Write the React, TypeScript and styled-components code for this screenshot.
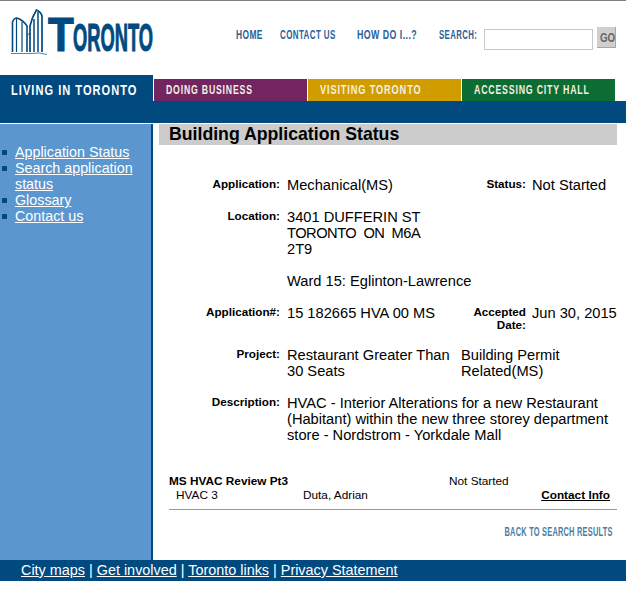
import styled, { createGlobalStyle } from "styled-components";

const GlobalStyle = createGlobalStyle`
  html, body {
    margin: 0;
    padding: 0;
    background: #fff;
  }
  body {
    font-family: "Liberation Sans", Arial, sans-serif;
    color: #000;
  }
`;

function CityHallLogo() {
  return (
    <svg width="38" height="46" viewBox="0 0 38 46" fill="none" stroke="#004a80">
      <path d="M1.5 43V13Q3 9 6 9Q12 11 16 17V43" strokeWidth="1.6" />
      <path d="M5.5 43V10M11 43V13" strokeWidth="1.2" />
      <path d="M19 43V17Q21 8 25.5 1Q30 3 31 7V43" strokeWidth="1.7" />
      <path d="M23 43V10M27 43V3" strokeWidth="1.5" />
      <path d="M16 26Q18 25 19 24" strokeWidth="1" />
      <path d="M0 44.5H20Q28 43 36 45.5" stroke="#3f8f9f" strokeWidth="1" />
    </svg>
  );
}

export default function App() {
  return (
    <>
      <GlobalStyle />
      <Page>
        <Header>
          <LogoLink>
            <CityHallLogo />
            <LogoWord>
              <LogoCap>T</LogoCap>
              <LogoRest>ORONTO</LogoRest>
            </LogoWord>
          </LogoLink>
          <TopNav>
            <TopLink $width={44}><Squeezed $scale={0.7}>HOME</Squeezed></TopLink>
            <TopLink $width={77}><Squeezed $scale={0.665}>CONTACT US</Squeezed></TopLink>
            <TopLink $width={82}><Squeezed $scale={0.735}>HOW DO I...?</Squeezed></TopLink>
            <TopLink $width={45}><Squeezed $scale={0.65}>SEARCH:</Squeezed></TopLink>
            <SearchInput />
            <GoButton><Squeezed $scale={0.75}>GO</Squeezed></GoButton>
          </TopNav>
        </Header>

        <TabBar>
          <ActiveTab><Squeezed $scale={0.79}>LIVING IN TORONTO</Squeezed></ActiveTab>
          <Tab $color="#722561"><Squeezed $scale={0.67}>DOING BUSINESS</Squeezed></Tab>
          <Tab $color="#d19c00"><Squeezed $scale={0.71}>VISITING TORONTO</Squeezed></Tab>
          <Tab $color="#0d6c34"><Squeezed $scale={0.675}>ACCESSING CITY HALL</Squeezed></Tab>
        </TabBar>
        <BlueStrip />

        <Columns>
          <Sidebar>
            <SideList>
              <li><SideLink>Application Status</SideLink></li>
              <li><SideLink>Search application status</SideLink></li>
              <li><SideLink>Glossary</SideLink></li>
              <li><SideLink>Contact us</SideLink></li>
            </SideList>
          </Sidebar>

          <Content>
            <Heading>Building Application Status</Heading>

            <Details>
              <Label>Application:</Label>
              <Value>Mechanical(MS)</Value>
              <Label>Status:</Label>
              <SideValue>Not Started</SideValue>

              <Label>Location:</Label>
              <WideValue>
                3401 DUFFERIN ST
                <br />
                <TightLine>TORONTO&nbsp; ON&nbsp; M6A</TightLine>
                <br />
                2T9
                <br />
                <br />
                Ward 15: Eglinton-Lawrence
              </WideValue>

              <Label>Application#:</Label>
              <Value>15 182665 HVA 00 MS</Value>
              <Label>
                Accepted
                <br />
                Date:
              </Label>
              <SideValue>Jun 30, 2015</SideValue>

              <Label>Project:</Label>
              <Value>Restaurant Greater Than 30 Seats</Value>
              <SpanValue>
                Building Permit
                <br />
                Related(MS)
              </SpanValue>

              <Label>Description:</Label>
              <FullValue>
                HVAC - Interior Alterations for a new Restaurant (Habitant) within the new three storey
                department store - Nordstrom - Yorkdale Mall
              </FullValue>
            </Details>

            <Review>
              <ReviewTitle>MS HVAC Review Pt3</ReviewTitle>
              <ReviewStatus>Not Started</ReviewStatus>
              <ReviewType>HVAC 3</ReviewType>
              <ReviewPerson>Duta, Adrian</ReviewPerson>
              <ContactLink>Contact Info</ContactLink>
            </Review>
            <Rule />
            <BackLink><BackText>BACK TO SEARCH RESULTS</BackText></BackLink>
          </Content>
        </Columns>

        <Footer>
          <FooterLink>City maps</FooterLink> | <FooterLink>Get involved</FooterLink> |{" "}
          <FooterLink>Toronto links</FooterLink> | <FooterLink>Privacy Statement</FooterLink>
        </Footer>
      </Page>
    </>
  );
}

const Page = styled.div`
  width: 626px;
  height: 589px;
  overflow: hidden;
  border-top: 1px solid #808080;
  box-sizing: border-box;
`;

// no narrow face is installed, so the condensed nav lettering is squeezed by hand
const Squeezed = styled.span<{ $scale: number }>`
  display: inline-block;
  white-space: nowrap;
  transform: scaleX(${(p) => p.$scale});
  transform-origin: left center;
`;

const Header = styled.header`
  height: 74px;
  display: flex;
  align-items: flex-start;
`;

const LogoLink = styled.div`
  display: flex;
  align-items: flex-start;
  padding: 8px 0 0 11px;
  width: 225px;
  box-sizing: border-box;
`;

const LogoWord = styled.div`
  display: flex;
  align-items: flex-end;
  height: 44px;
  margin-left: -1px;
  color: #004a80;
  font-weight: bold;
  line-height: 1;
  -webkit-text-stroke: 1.1px #004a80;
`;

const LogoCap = styled.span`
  display: block;
  width: 25px;
  font-size: 48px;
  line-height: 37px;
  transform: scaleX(0.88);
  transform-origin: left bottom;
`;

const LogoRest = styled.span`
  display: block;
  width: 81px;
  font-size: 39px;
  line-height: 30px;
  white-space: nowrap;
  transform: scaleX(0.47);
  transform-origin: left bottom;
`;

const TopNav = styled.nav`
  display: flex;
  align-items: flex-start;
  padding: 26px 0 0 11px;
`;

const TopLink = styled.a<{ $width: number }>`
  width: ${(p) => p.$width}px;
  flex: none;
  font-size: 12px;
  line-height: 16px;
  letter-spacing: 0.6px;
  font-weight: bold;
  color: #2a6198;
  white-space: nowrap;
`;

const SearchInput = styled.input`
  width: 109px;
  height: 21px;
  flex: none;
  box-sizing: border-box;
  border: 1px solid #c8c8c8;
  margin: 2px 4px 0 0;
  padding: 0;
`;

const GoButton = styled.button`
  width: 19px;
  height: 21px;
  flex: none;
  box-sizing: border-box;
  padding: 0 0 0 3px;
  border: 0;
  border-right: 1px solid #a8a8a8;
  border-bottom: 1px solid #a8a8a8;
  background: #cfcfcf;
  color: #666;
  font-family: "Liberation Sans", sans-serif;
  font-weight: bold;
  font-size: 13px;
  text-align: left;
`;

const TabBar = styled.div`
  display: flex;
  height: 26px;
`;

const ActiveTab = styled.div`
  width: 153px;
  box-sizing: border-box;
  padding: 8px 0 0 11px;
  background: #004a80;
  color: #fff;
  font-weight: bold;
  font-size: 14px;
  line-height: 15px;
  letter-spacing: 1.3px;
  white-space: nowrap;
  overflow: hidden;
`;

const Tab = styled.div<{ $color: string }>`
  width: 153px;
  margin: 4px 0 0 1px;
  box-sizing: border-box;
  padding: 3px 0 0 12px;
  background: ${(p) => p.$color};
  color: #f4f0e0;
  font-weight: bold;
  font-size: 13px;
  line-height: 15px;
  letter-spacing: 1.2px;
  white-space: nowrap;
  overflow: hidden;
`;

const BlueStrip = styled.div`
  height: 22px;
  background: #004a80;
`;

const Columns = styled.div`
  display: flex;
  height: 436px;
  border-top: 1px solid #fff;
`;

const Sidebar = styled.aside`
  width: 151px;
  flex: none;
  background: #5b96cf;
  border-right: 2px solid #004a80;
  padding-top: 20px;
`;

const SideList = styled.ul`
  margin: 0;
  padding: 0 0 0 15px;
  list-style: none;
  font-size: 14.3px;
  line-height: 16px;

  li {
    position: relative;
  }

  li::before {
    content: "";
    position: absolute;
    left: -13px;
    top: 6px;
    width: 5px;
    height: 5px;
    background: #004a80;
  }
`;

const SideLink = styled.a`
  color: #fff;
  text-decoration: underline;
`;

const Content = styled.main`
  flex: 1;
  padding-left: 6px;
`;

const Heading = styled.h1`
  width: 458px;
  height: 21px;
  box-sizing: border-box;
  margin: 0;
  padding-left: 10px;
  background: #cccccc;
  font-size: 17.7px;
  line-height: 21px;
  font-weight: bold;
`;

const Details = styled.div`
  display: grid;
  grid-template-columns: 121px 181px 65px 91px;
  width: 458px;
  row-gap: 16px;
  margin-top: 32px;
  font-size: 14.67px;
  line-height: 16px;
`;

const Label = styled.div`
  font-size: 11.7px;
  font-weight: bold;
  line-height: 13px;
  text-align: right;
`;

const Value = styled.div`
  padding-left: 7px;
`;

const SideValue = styled.div`
  padding-left: 6px;
  white-space: nowrap;
`;

const WideValue = styled(Value)`
  grid-column: 2 / 5;
  width: 190px;
`;

const TightLine = styled.span`
  letter-spacing: -0.5px;
`;

const SpanValue = styled.div`
  grid-column: 3 / 5;
`;

const FullValue = styled(Value)`
  grid-column: 2 / 5;
`;

const Review = styled.div`
  display: grid;
  grid-template-columns: 134px 146px 1fr;
  margin: 31px 16px 0 10px;
  font-size: 11.8px;
  line-height: 14px;
`;

const ReviewTitle = styled.div`
  grid-column: 1 / 3;
  font-weight: bold;
`;

const ReviewStatus = styled.div``;

const ReviewType = styled.div`
  padding-left: 7px;
`;

const ReviewPerson = styled.div``;

const ContactLink = styled.a`
  justify-self: end;
  font-weight: bold;
  text-decoration: underline;
`;

const Rule = styled.hr`
  margin: 7px 0 0 10px;
  width: 448px;
  height: 1px;
  border: 0;
  background: #999;
`;

const BackLink = styled.div`
  display: flex;
  justify-content: flex-end;
  margin: 14px 13px 0 0;
  color: #4c7d9f;
`;

const BackText = styled.a`
  display: block;
  font-size: 13px;
  font-weight: bold;
  letter-spacing: 0.4px;
  white-space: nowrap;
  transform: scaleX(0.57);
  transform-origin: right center;
`;

const Footer = styled.footer`
  height: 21px;
  box-sizing: border-box;
  padding-left: 21px;
  background: #004a80;
  color: #fff;
  font-size: 14.4px;
  line-height: 21px;
`;

const FooterLink = styled.a`
  color: #fff;
  text-decoration: underline;
`;
